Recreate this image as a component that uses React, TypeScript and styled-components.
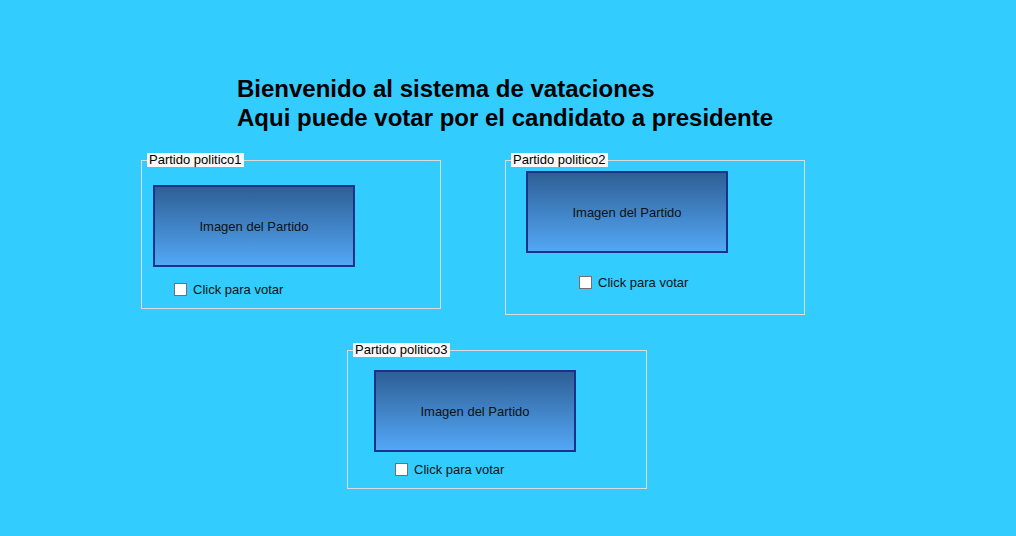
import * as React from 'react'
import styled, { createGlobalStyle } from 'styled-components'

type Party = {
  name: string
  height: number
  imgTop: number
  imgLeft: number
  checkGap: number
  checkLeft: number
}

const row1: Party[] = [
  { name: 'Partido politico1', height: 149, imgTop: 24, imgLeft: 11, checkGap: 16, checkLeft: 32 },
  { name: 'Partido politico2', height: 155, imgTop: 10, imgLeft: 20, checkGap: 23, checkLeft: 73 },
]

const row2: Party[] = [
  { name: 'Partido politico3', height: 139, imgTop: 19, imgLeft: 26, checkGap: 11, checkLeft: 47 },
]

const PartyBox = ({ party }: { party: Party }) => (
  <Group $height={party.height}>
    <Legend>{party.name}</Legend>
    <Content $top={party.imgTop} $left={party.imgLeft}>
      <ImageButton>Imagen del Partido</ImageButton>
      <CheckRow $gap={party.checkGap} $left={party.checkLeft - party.imgLeft}>
        <Check type="checkbox" />
        <span>Click para votar</span>
      </CheckRow>
    </Content>
  </Group>
)

const App = () => {
  return (
    <>
      <GlobalStyle />
      <Page>
        <Heading>
          Bienvenido al sistema de vataciones
          <br />
          Aqui puede votar por el candidato a presidente
        </Heading>
        <Row $left={141} $top={28} $gap={64}>
          {row1.map((p) => (
            <PartyBox key={p.name} party={p} />
          ))}
        </Row>
        <Row $left={347} $top={35} $gap={0}>
          {row2.map((p) => (
            <PartyBox key={p.name} party={p} />
          ))}
        </Row>
      </Page>
    </>
  )
}

export default App

// Styles
const GlobalStyle = createGlobalStyle`
  html, body {
    margin: 0;
    padding: 0;
    background: #33ccff;
    font-family: "Liberation Sans", Arial, sans-serif;
  }
`

const Page = styled.div`
  width: 1016px;
  height: 536px;
  padding-top: 74px;
  box-sizing: border-box;
  overflow: hidden;
`

const Heading = styled.h1`
  margin: 0 0 0 237px;
  font-size: 24px;
  line-height: 29px;
  font-weight: bold;
  color: #000;
`

const Row = styled.div<{ $left: number; $top: number; $gap: number }>`
  display: flex;
  align-items: flex-start;
  gap: ${(p) => p.$gap}px;
  margin-top: ${(p) => p.$top}px;
  padding-left: ${(p) => p.$left}px;
`

const Group = styled.div<{ $height: number }>`
  position: relative;
  width: 300px;
  height: ${(p) => p.$height}px;
  box-sizing: border-box;
  border: 1px solid #dcdcdc;
`

const Legend = styled.span`
  position: absolute;
  top: -8px;
  left: 5px;
  padding: 0 2px;
  background: #f8f8f8;
  font-size: 13px;
  line-height: 14px;
  color: #000;
`

const Content = styled.div<{ $top: number; $left: number }>`
  display: flex;
  flex-direction: column;
  align-items: flex-start;
  padding: ${(p) => p.$top}px 0 0 ${(p) => p.$left}px;
`

const ImageButton = styled.div`
  width: 202px;
  height: 82px;
  box-sizing: border-box;
  border: 2px solid #17338a;
  background: linear-gradient(to bottom, #2e5f95, #53a7f6);
  display: flex;
  align-items: center;
  justify-content: center;
  font-size: 13px;
  color: #111;
`

const CheckRow = styled.label<{ $gap: number; $left: number }>`
  display: flex;
  align-items: center;
  gap: 6px;
  margin: ${(p) => p.$gap}px 0 0 ${(p) => p.$left}px;
  font-size: 13px;
  line-height: 13px;
  color: #111;
`

const Check = styled.input`
  appearance: none;
  margin: 0;
  width: 13px;
  height: 13px;
  box-sizing: border-box;
  border: 1px solid #707070;
  background: #fff;
`
